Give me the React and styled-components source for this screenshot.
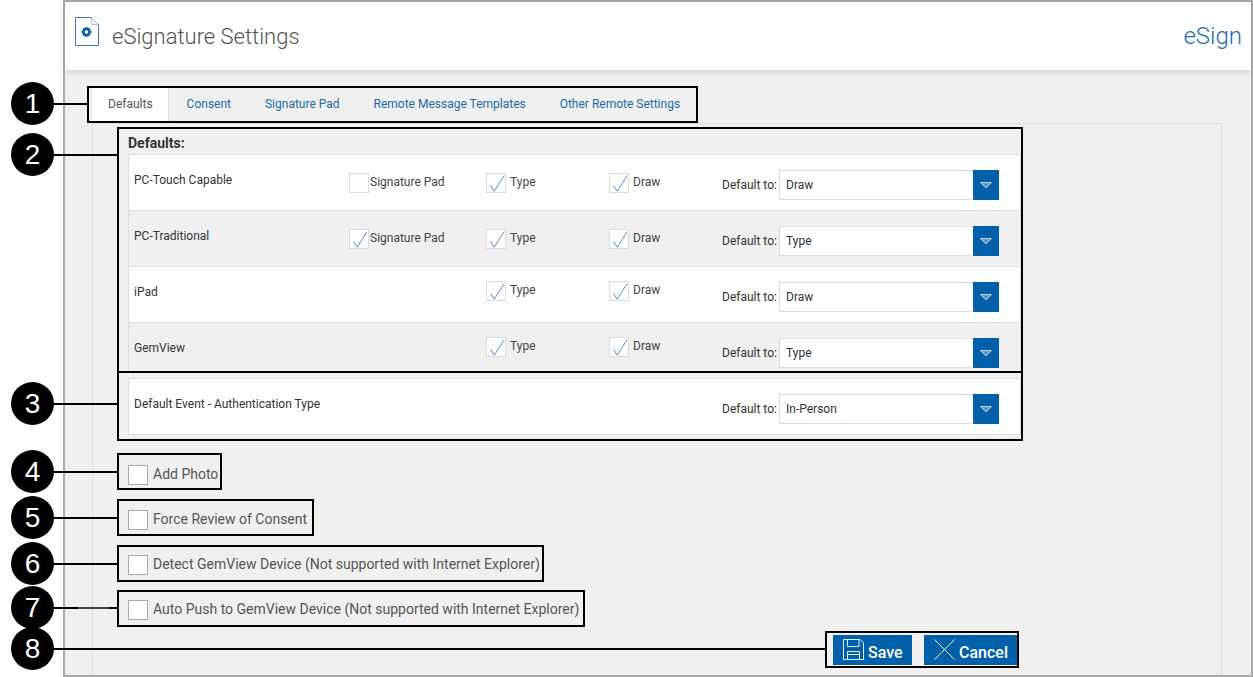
import React from 'react';
import styled, { createGlobalStyle } from 'styled-components';

const GlobalStyle = createGlobalStyle`
    * {
        box-sizing: border-box;
    }
    body {
        margin: 0;
        background: #ffffff;
        font-family: Roboto, "Liberation Sans", sans-serif;
    }
`;

const deviceRows = [
    { name: 'PC-Touch Capable', signature: false, value: 'Draw', bg: '#ffffff', top: 18 },
    { name: 'PC-Traditional', signature: true, value: 'Type', bg: '#f0f0f0', top: 18 },
    { name: 'iPad', value: 'Draw', bg: '#ffffff', top: 14 },
    { name: 'GemView', value: 'Type', bg: '#f0f0f0', top: 14, height: 48 },
];

const options = [
    { label: 'Add Photo', pad: 10, top: 12, width: 105 },
    { label: 'Force Review of Consent', pad: 9, top: 9, width: 197 },
    { label: 'Detect GemView Device (Not supported with Internet Explorer)', pad: 8, top: 9, width: 427 },
    { label: 'Auto Push to GemView Device (Not supported with Internet Explorer)', pad: 8, top: 8, width: 468 },
];

const callouts = [
    { n: 1, top: 82, line: 34 },
    { n: 2, top: 133, line: 64 },
    { n: 3, top: 382, line: 64 },
    { n: 4, top: 450, line: 64 },
    { n: 5, top: 496, line: 64 },
    { n: 6, top: 542, line: 64 },
    { n: 7, top: 586, line: 64, thin: true },
    { n: 8, top: 627, line: 772 },
];

function DocIcon() {
    return (
        <svg width="24" height="29" viewBox="0 0 24 29" fill="none">
            <path d="M0.5 0.5H16.5L23.5 7.5V28.5H0.5Z" fill="#fff" stroke="#3d79b8" />
            <path d="M16.5 0.5V7.5H23.5" fill="#fff" stroke="#a9c4e0" />
            <circle cx="11.5" cy="15" r="3" stroke="#0b5ea8" strokeWidth="2.4" />
            {[0, 45, 90, 135, 180, 225, 270, 315].map((a) => (
                <rect key={a} x="10.5" y="10" width="2" height="2" fill="#0b5ea8" transform={`rotate(${a} 11.5 15)`} />
            ))}
        </svg>
    );
}

function CheckMark() {
    return (
        <svg width="20" height="20" viewBox="0 0 20 20" fill="none">
            <path d="M4.5 12.5L8.2 18.2L18 2.8" stroke="#5a8fc4" strokeWidth="1" />
        </svg>
    );
}

function ArrowIcon() {
    return (
        <svg width="12" height="7" viewBox="0 0 12 7" fill="none">
            <path d="M0.6 0.6H11.4L6 5.8Z" fill="#4f93c6" stroke="#ffffff" strokeWidth="0.8" />
        </svg>
    );
}

function SaveIcon() {
    return (
        <svg width="21" height="21" viewBox="0 0 21 21" fill="none" stroke="#e6f0f8">
            <path d="M0.5 0.5H17L20.5 4V20.5H0.5Z" />
            <path d="M4.5 0.5V7.5H16V0.5" />
            <path d="M4.5 20.5V12.5H16.5V20.5" />
            <path d="M4.5 15.5H16.5" />
        </svg>
    );
}

function CancelIcon() {
    return (
        <svg width="21" height="21" viewBox="0 0 21 21" fill="none" stroke="#ffffff">
            <path d="M0.5 0.5L20.5 20.5M20.5 0.5L0.5 20.5" />
        </svg>
    );
}

function DefaultSelect({ value }) {
    return (
        <DefaultCell>
            <DefaultLabel>Default to:</DefaultLabel>
            <SelectBox>
                <SelectValue>{value}</SelectValue>
                <SelectButton>
                    <ArrowIcon />
                </SelectButton>
            </SelectBox>
        </DefaultCell>
    );
}

function CheckCell({ label, checked, top, gap = 4 }) {
    return (
        <Cell $top={top}>
            <SmallBox>{checked && <CheckMark />}</SmallBox>
            <SmallLabel $gap={gap}>{label}</SmallLabel>
        </Cell>
    );
}

export default function App() {
    return (
        <Page>
            <GlobalStyle />
            <Frame>
                <Header>
                    <HeaderLeft>
                        <DocIcon />
                        <Title>eSignature Settings</Title>
                    </HeaderLeft>
                    <ModuleName>eSign</ModuleName>
                </Header>
                <Content>
                    <TabBar>
                        <Tab $active>Defaults</Tab>
                        <Tab>Consent</Tab>
                        <Tab>Signature Pad</Tab>
                        <Tab>Remote Message Templates</Tab>
                        <Tab>Other Remote Settings</Tab>
                    </TabBar>
                    <Panel>
                        <Stack>
                            <Section>
                                <SectionPart>
                                    <SectionTitle>Defaults:</SectionTitle>
                                    <Group>
                                        {deviceRows.map((row) => (
                                            <Row key={row.name} $bg={row.bg} $height={row.height}>
                                                <RowName>{row.name}</RowName>
                                                {row.signature !== undefined ? (
                                                    <CheckCell label="Signature Pad" checked={row.signature} top={row.top} gap={1} />
                                                ) : (
                                                    <span />
                                                )}
                                                <CheckCell label="Type" checked top={row.top} />
                                                <CheckCell label="Draw" checked top={row.top} />
                                                <DefaultSelect value={row.value} />
                                            </Row>
                                        ))}
                                    </Group>
                                </SectionPart>
                                <AuthPart>
                                    <AuthRow>
                                        <RowName>Default Event - Authentication Type</RowName>
                                        <span />
                                        <span />
                                        <span />
                                        <DefaultSelect value="In-Person" />
                                    </AuthRow>
                                </AuthPart>
                            </Section>
                            {options.map((opt) => (
                                <OptionBox key={opt.label} $pad={opt.pad} $top={opt.top} $width={opt.width}>
                                    <OptionCheck />
                                    <OptionLabel>{opt.label}</OptionLabel>
                                </OptionBox>
                            ))}
                            <Actions>
                                <ActionButton $width={79}>
                                    <SaveIcon />
                                    <ActionText>Save</ActionText>
                                </ActionButton>
                                <ActionButton $width={93}>
                                    <CancelIcon />
                                    <ActionText>Cancel</ActionText>
                                </ActionButton>
                            </Actions>
                        </Stack>
                    </Panel>
                </Content>
            </Frame>
            {callouts.map((c) => (
                <Callout key={c.n} $top={c.top}>
                    <Badge>{c.n}</Badge>
                    <Leader $width={c.line} $thin={c.thin} />
                </Callout>
            ))}
        </Page>
    );
}

const Page = styled.div`
    position: relative;
    width: 1253px;
    height: 677px;
    padding-left: 63px;
    overflow: hidden;
`;
const Frame = styled.div`
    display: flex;
    flex-direction: column;
    width: 1190px;
    height: 677px;
    border: 2px solid #a9a9a9;
    background: #f0f0f0;
`;
const Header = styled.div`
    display: flex;
    justify-content: space-between;
    flex: 0 0 68px;
    padding: 15px 9px 0 10px;
    background: #ffffff;
    box-shadow: 0 2px 6px rgba(0, 0, 0, 0.12);
`;
const HeaderLeft = styled.div`
    display: flex;
    align-items: flex-start;
    gap: 13px;
`;
const Title = styled.div`
    margin-top: 5px;
    font-size: 22px;
    line-height: 30px;
    font-weight: 300;
    color: #555555;
`;
const ModuleName = styled.div`
    margin-top: 2px;
    font-size: 24px;
    line-height: 34px;
    font-weight: 300;
    color: #1a6db5;
`;
const Content = styled.div`
    display: flex;
    flex-direction: column;
    flex: 1;
    min-height: 0;
    padding-top: 16px;
`;
const TabBar = styled.div`
    display: flex;
    align-self: flex-start;
    width: 611px;
    height: 37px;
    margin-left: 22px;
    padding: 0 0 0 3px;
    border: 2px solid #000000;
`;
const Tab = styled.div`
    display: flex;
    align-items: center;
    margin-right: ${(props) => (props.$active ? '1px' : '0')};
    padding: 0 ${(props) => (props.$active ? '15px' : '17px')} 2px ${(props) => (props.$active ? '16px' : '17px')};
    border-right: ${(props) => (props.$active ? '1px solid #dddddd' : 'none')};
    background: ${(props) => (props.$active ? '#ffffff' : 'transparent')};
    font-size: 12px;
    white-space: nowrap;
    color: ${(props) => (props.$active ? '#555555' : '#1c6aa8')};
`;
const Panel = styled.div`
    flex: 1;
    width: 1130px;
    margin-left: 27px;
    padding: 3px 0 0 24px;
    border: 1px solid #e0e0e0;
    border-bottom: none;
`;
const Stack = styled.div`
    display: flex;
    flex-direction: column;
    width: 906px;
`;
const Section = styled.div`
    height: 314px;
    border: 2px solid #000000;
`;
const SectionPart = styled.div`
    padding-left: 9px;
`;
const SectionTitle = styled.div`
    height: 25px;
    padding-top: 5px;
    font-size: 14px;
    line-height: 18px;
    font-weight: 700;
    color: #333333;
`;
const Group = styled.div`
    border-top: 1px solid #dddddd;
    border-left: 1px solid #dddddd;
    border-right: 1px solid #dddddd;
`;
const Row = styled.div`
    display: grid;
    grid-template-columns: 215px 137px 123px 113px auto;
    align-items: start;
    height: ${(props) => props.$height || 56}px;
    padding-left: 5px;
    background: ${(props) => props.$bg};
    border-bottom: ${(props) => (props.$height ? 'none' : '1px solid #dddddd')};
`;
const AuthPart = styled.div`
    padding: 5px 0 4px 9px;
    border-top: 2px solid #000000;
`;
const AuthRow = styled(Row)`
    height: 57px;
    background: #ffffff;
    border: 1px solid #dddddd;
`;
const RowName = styled.div`
    margin-top: 18px;
    font-size: 12px;
    line-height: 14px;
    color: #333333;
`;
const Cell = styled.div`
    display: flex;
    align-items: flex-start;
    margin-top: ${(props) => props.$top}px;
`;
const SmallBox = styled.div`
    flex: 0 0 20px;
    height: 20px;
    border: 1px solid #dcdcdc;
    background: #ffffff;
    position: relative;

    svg {
        position: absolute;
        left: -1px;
        top: -1px;
    }
`;
const SmallLabel = styled.div`
    margin: 2px 0 0 ${(props) => props.$gap}px;
    font-size: 12px;
    line-height: 14px;
    color: #444444;
`;
const DefaultCell = styled.div`
    display: flex;
    align-items: center;
    gap: 3px;
    margin-top: 15px;
`;
const DefaultLabel = styled.div`
    width: 54px;
    font-size: 12px;
    white-space: nowrap;
    color: #333333;
`;
const SelectBox = styled.div`
    display: flex;
    width: 220px;
    height: 30px;
    border: 1px solid #dddddd;
    border-right: none;
    background: #ffffff;
`;
const SelectValue = styled.div`
    flex: 1;
    padding-left: 6px;
    font-size: 12px;
    line-height: 28px;
    color: #333333;
`;
const SelectButton = styled.div`
    display: flex;
    align-items: center;
    justify-content: center;
    width: 26px;
    height: 30px;
    margin-top: -1px;
    background: #0060a9;
`;
const OptionBox = styled.div`
    display: flex;
    align-items: flex-start;
    align-self: flex-start;
    width: ${(props) => props.$width}px;
    height: 37px;
    margin-top: ${(props) => props.$top}px;
    padding: ${(props) => props.$pad}px 0 0 9px;
    border: 2px solid #000000;
`;
const OptionCheck = styled.div`
    width: 20px;
    height: 20px;
    border: 1px solid #aaaaaa;
    background: #ffffff;
`;
const OptionLabel = styled.div`
    margin: -1px 0 0 5px;
    font-size: 14px;
    line-height: 20px;
    white-space: nowrap;
    color: #555555;
`;
const Actions = styled.div`
    display: flex;
    align-self: flex-end;
    gap: 12px;
    height: 37px;
    margin: 4px 4px 0 0;
    padding: 2px 0 0 6px;
    border: 2px solid #000000;
`;
const ActionButton = styled.div`
    display: flex;
    align-items: center;
    gap: 4px;
    width: ${(props) => props.$width}px;
    height: 30px;
    padding-left: 10px;
    background: #0060a9;
    font-size: 16px;
    font-weight: 500;
    color: #ffffff;

    svg {
        margin-top: -1px;
    }
`;
const ActionText = styled.span`
    margin-top: 4px;
`;
const Callout = styled.div`
    position: absolute;
    left: 11px;
    top: ${(props) => props.$top}px;
    display: flex;
    align-items: center;
`;
const Badge = styled.div`
    display: flex;
    align-items: center;
    justify-content: center;
    width: 43px;
    height: 43px;
    border-radius: 50%;
    background: #000000;
    font-family: "Liberation Sans", Arial, sans-serif;
    font-size: 28px;
    color: #ffffff;
`;
const Leader = styled.div`
    width: ${(props) => props.$width}px;
    height: 2px;
    background: ${(props) =>
        props.$thin
            ? 'linear-gradient(to right, #000 24px, #444 24px, #444 55px, #000 55px)'
            : '#000000'};
`;
